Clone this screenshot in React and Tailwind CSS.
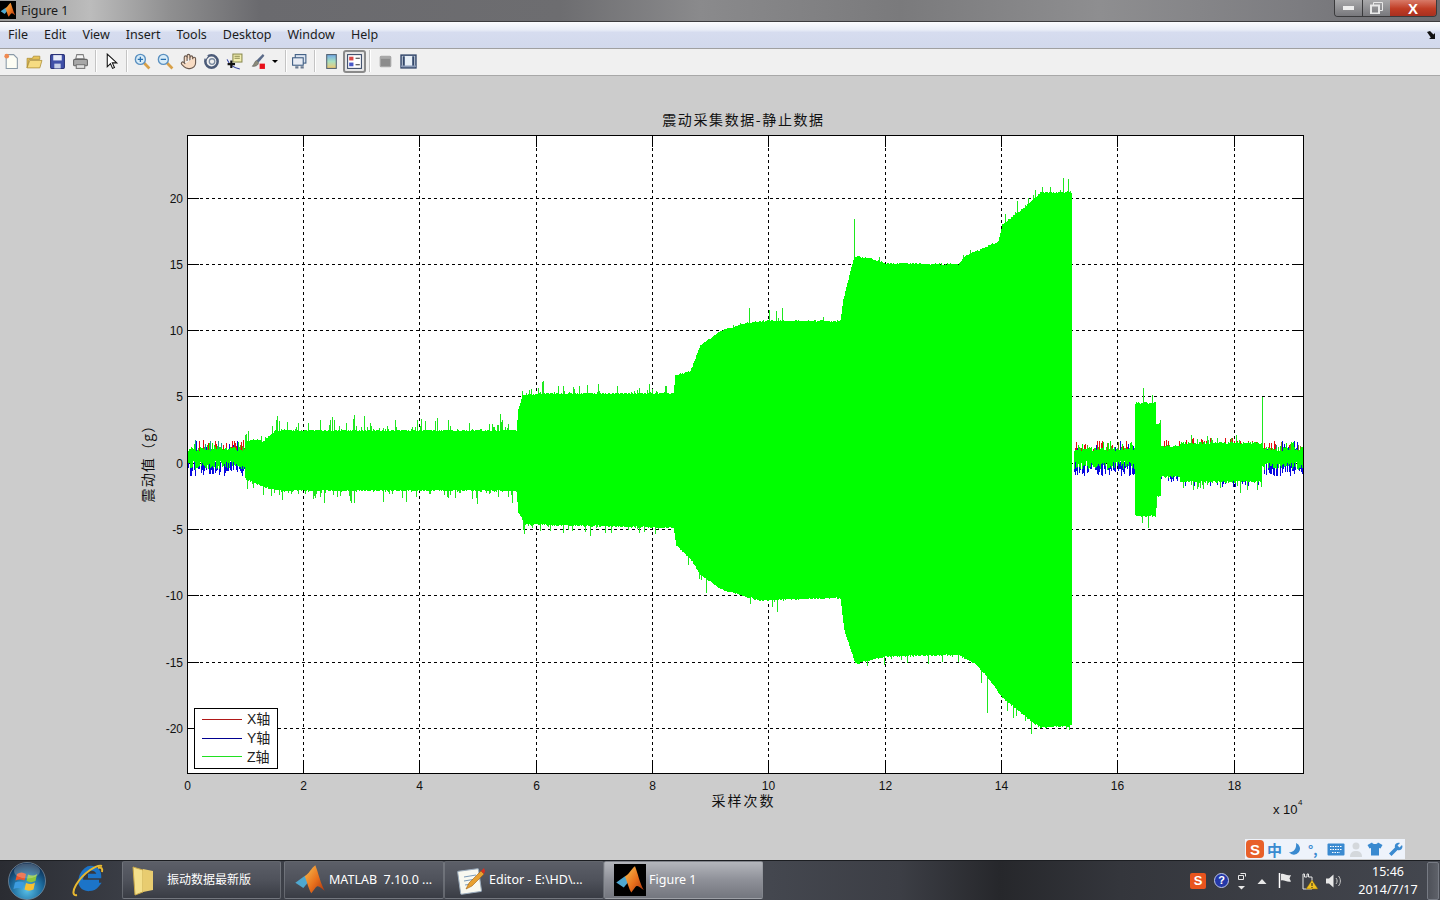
import React from "react";
import { Hand } from "lucide-react";

// seeded random so the trace stays the same on every render
let seed = 12345;
const rnd = () => {
  seed = (seed * 1664525 + 1013904223) % 4294967296;
  return seed / 4294967296;
};

const lerp = (pts, x) => {
  for (let i = 1; i < pts.length; i++) {
    if (x <= pts[i][0]) {
      const [x0, y0] = pts[i - 1];
      const [x1, y1] = pts[i];
      return y0 + ((y1 - y0) * (x - x0)) / (x1 - x0 || 1);
    }
  }
  return pts[pts.length - 1][1];
};

const upper = [
  [245, 442], [258, 440], [262, 443], [270, 436], [276, 431], [516, 431], [518, 410], [522, 396],
  [540, 394], [673, 394], [675, 376], [690, 372], [700, 346], [720, 332], [745, 324], [770, 321],
  [840, 322], [843, 300], [848, 280], [854, 257], [870, 259], [885, 264], [958, 265], [965, 257],
  [985, 248], [998, 242], [1002, 225], [1015, 215], [1028, 205], [1040, 193], [1071, 193], [1072, 193],
];
const lower = [
  [245, 478], [258, 484], [270, 488], [280, 490], [516, 490], [518, 512], [525, 524], [673, 527],
  [676, 545], [690, 558], [700, 574], [720, 588], [760, 600], [840, 597], [844, 630], [855, 663],
  [885, 656], [958, 654], [975, 663], [990, 680], [1000, 695], [1020, 712], [1040, 727], [1071, 725], [1072, 725],
];

// how often a spike leaves the envelope, by stretch of the recording
const spikeRate = (x) => {
  if (x < 516) return 0.24;
  if (x < 673) return 0.14;
  if (x < 1000) return 0.06;
  return 0.08;
};

const body = [];
const spikes = [];
for (let x = 245; x <= 1071; x++) {
  const jitter = rnd() * 1.6;
  const t = lerp(upper, x) - jitter;
  const b = lerp(lower, x) + jitter;
  body.push(`M${x + 0.5} ${t}V${b}`);
  if (rnd() < spikeRate(x)) spikes.push(`M${x + 0.5} ${t}v${-2 - Math.pow(rnd(), 1.8) * 14}`);
  if (rnd() < spikeRate(x)) spikes.push(`M${x + 0.5} ${b}v${2 + Math.pow(rnd(), 1.8) * 12}`);
}

// quiet parts of the recording, with red and blue showing around the green
const red = [];
const blue = [];
const olive = [];
const teal = [];
const green = [];
const quiet = (from, to) => {
  for (let x = from; x <= to; x++) {
    const px = x + 0.5;
    const top = 452 - (2 + rnd() * 10);
    const pick = rnd();
    if (pick < 0.28) red.push(`M${px} 453V${top}`);
    else if (pick < 0.46) blue.push(`M${px} 453V${top}`);
    else if (pick < 0.58) olive.push(`M${px} 453V${top}`);
    else if (pick < 0.66) teal.push(`M${px} 453V${top}`);
    else if (pick < 0.84) green.push(`M${px} 453V${top}`);
    if (rnd() < 0.7) blue.push(`M${px} 462V${468 + rnd() * 8.5}`);
    green.push(`M${px} ${451 - rnd() * 4}V${461 + rnd() * 9}`);
  }
};
quiet(187, 244);
quiet(1074, 1134);
quiet(1262, 1302);

const noisy = [];
for (let x = 1135; x <= 1160; x++) {
  const narrow = x > 1155;
  const t = narrow ? 425 : 404;
  const b = narrow ? 495 : 515;
  noisy.push(`M${x + 0.5} ${t - rnd() * 2}V${b + rnd() * 2}`);
}
for (let x = 1161; x <= 1261; x++) {
  const px = x + 0.5;
  const rise = x < 1180 ? 447 : 444;
  const fall = x < 1180 ? 476 : 481;
  noisy.push(`M${px} ${rise - rnd() * 2}V${fall + rnd() * 2}`);
  if (rnd() < 0.22) red.push(`M${px} ${rise}v${-2 - rnd() * 5}`);
  if (rnd() < 0.25) blue.push(`M${px} ${fall}v${2 + rnd() * 5}`);
  if (rnd() < 0.2 && x > 1178 && x < 1240) spikes.push(`M${px} ${rise}v${-2 - rnd() * 12}`);
  if (rnd() < 0.24 && x > 1178) spikes.push(`M${px} ${fall}v${2 + rnd() * 10}`);
}

const extra = [
  [854, 219, 258], [1063, 178, 193], [1068, 179, 193], [987, 672, 713], [1143, 388, 405], [1152, 395, 405],
  [1148, 515, 528], [1142, 515, 523], [1262, 397, 446], [1160, 420, 432], [1156, 495, 508],
];
extra.forEach(([x, a, b]) => spikes.push(`M${x + 0.5} ${a}V${b}`));

const xTicks = [303.5, 419.5, 536.5, 652.5, 768.5, 885.5, 1001.5, 1117.5, 1234.5];
const yTicks = [198.5, 264.5, 330.5, 396.5, 463.5, 529.5, 595.5, 662.5, 728.5];
const yLabels = ["20", "15", "10", "5", "0", "-5", "-10", "-15", "-20"];
const xLabels = ["2", "4", "6", "8", "10", "12", "14", "16", "18"];

const MatlabLogo = ({ size = 20 }) => (
  <svg width={size} height={size} viewBox="0 0 24 24">
    <defs>
      <linearGradient id="peak" x1="0" y1="0" x2="1" y2="1">
        <stop offset="0" stopColor="#f8c050" />
        <stop offset="0.55" stopColor="#e8701c" />
        <stop offset="1" stopColor="#a83010" />
      </linearGradient>
    </defs>
    <path d="M1 14 L8 9 L12 12 L7 18 Z" fill="#4fa8d0" />
    <path d="M8 9 C11 8 13 3 16 1 C18 6 20 15 23 20 C20 18 18 15 16 18 L13 22 C11 19 10 14 8 9 Z" fill="url(#peak)" />
  </svg>
);

const Sep = ({ className = "mx-[3px]" }) => (
  <div className={`w-[2px] h-[22px] bg-[#c4c4c4] border-r border-white shrink-0 ${className}`} />
);

const Tool = ({ children, active }) => (
  <div
    className={`w-[23px] h-[23px] flex items-center justify-center shrink-0 ${
      active ? "border-2 border-[#8a8a8a] rounded-[3px] bg-[#e6e6e6]" : ""
    }`}
  >
    {children}
  </div>
);

const Icon = ({ children }) => (
  <svg width="17" height="17" viewBox="0 0 16 16">
    {children}
  </svg>
);

const Toolbar = () => (
  <div className="h-[26px] pb-[2px] bg-[#f0f0f0] flex items-center">
    <Tool>
      <Icon>
        <path d="M3 1.5h7l3.5 3.5v9.5H3z" fill="#fdfdf4" stroke="#8a9aa8" />
        <circle cx="3.5" cy="3" r="2.2" fill="#f08a50" />
      </Icon>
    </Tool>
    <Tool>
      <Icon>
        <path d="M1 5h5l1-2h6v3H3L1 14z" fill="#e8c458" stroke="#a88a30" strokeWidth="0.7" />
        <path d="M1 14l2.5-7H15l-2 7z" fill="#f6dc82" stroke="#a88a30" strokeWidth="0.7" />
      </Icon>
    </Tool>
    <Tool>
      <Icon>
        <rect x="1.5" y="1.5" width="13" height="13" rx="1" fill="#4050a8" stroke="#2a3278" />
        <rect x="4" y="2" width="8" height="5" fill="#e8ecf8" />
        <rect x="5" y="10" width="6" height="4.5" fill="#c8d0e8" />
      </Icon>
    </Tool>
    <Tool>
      <Icon>
        <path d="M4.5 1.5h6l1 4h-8z" fill="#f4f4f4" stroke="#808080" />
        <rect x="1.5" y="6" width="13" height="6" rx="1" fill="#a8a8a8" stroke="#666" />
        <rect x="4" y="11" width="8" height="3.5" fill="#e0e0e0" stroke="#777" />
      </Icon>
    </Tool>
    <Sep className="ml-[3px] mr-[3px]" />
    <Tool>
      <Icon>
        <path d="M4 1v12l3-3 2 4.5 1.8-.8-2-4.4H13z" fill="#fff" stroke="#111" strokeWidth="1" />
      </Icon>
    </Tool>
    <Sep />
    <Tool>
      <Icon>
        <path d="M9.5 9.5L14.5 14.5" stroke="#d8a048" strokeWidth="2.6" />
        <circle cx="6" cy="6" r="4.7" fill="#d8ecf8" stroke="#5a90c0" strokeWidth="1.3" />
        <path d="M3.5 6h5M6 3.5v5" stroke="#2a70b0" strokeWidth="1.2" />
      </Icon>
    </Tool>
    <Tool>
      <Icon>
        <path d="M9.5 9.5L14.5 14.5" stroke="#d8a048" strokeWidth="2.6" />
        <circle cx="6" cy="6" r="4.7" fill="#d8ecf8" stroke="#5a90c0" strokeWidth="1.3" />
        <path d="M3.5 6h5" stroke="#2a70b0" strokeWidth="1.2" />
      </Icon>
    </Tool>
    <Tool>
      <Hand size={17} fill="#f8dcc4" stroke="#6a5a50" strokeWidth={1.6} />
    </Tool>
    <Tool>
      <Icon>
        <circle cx="8" cy="8" r="5.8" fill="none" stroke="#4a5a78" strokeWidth="2.4" />
        <circle cx="8.5" cy="8" r="2.6" fill="none" stroke="#7a8aa0" strokeWidth="1.2" />
        <path d="M1 2l4 .5L2.5 6z" fill="#f0f0f0" />
      </Icon>
    </Tool>
    <Tool>
      <Icon>
        <rect x="6.5" y="1" width="8.5" height="7.5" fill="#f2eeb0" stroke="#8a8a50" />
        <path d="M8 3h5M8 5h5" stroke="#8a8a50" />
        <path d="M1 6c2 5 6 8 12 9" fill="none" stroke="#3040a0" />
        <path d="M5 7v7M1.5 10.5h7" stroke="#111" strokeWidth="2" />
      </Icon>
    </Tool>
    <Tool>
      <Icon>
        <path d="M13 1L7 7l2 2 5.5-6.5z" fill="#5a6a88" />
        <path d="M7 7c-2 1-1.500 3-4 5.500 3 .5 6-1 6-3.500z" fill="#8a8a7a" stroke="#555" strokeWidth="0.5" />
        <rect x="10" y="10" width="5" height="5" fill="#e8101a" />
      </Icon>
    </Tool>
    <div className="w-0 h-0 border-x-[3px] border-x-transparent border-t-[3px] border-t-black ml-[3px] mr-[5px] shrink-0" />
    <Sep className="ml-[2px] mr-[1px]" />
    <Tool>
      <Icon>
        <rect x="4" y="1.500" width="10" height="8" fill="#dce4f0" stroke="#3a5a80" />
        <rect x="1.500" y="4.500" width="10" height="7" fill="#e8ecf4" stroke="#3a5a80" />
        <path d="M4 13.500h3M9 13.500h3" stroke="#6a7a90" strokeWidth="2" />
      </Icon>
    </Tool>
    <Sep className="ml-[3px] mr-[4px]" />
    <Tool>
      <svg width="17" height="17" viewBox="0 0 16 16">
        <defs>
          <linearGradient id="cbar" x1="0" y1="0" x2="0" y2="1">
            <stop offset="0" stopColor="#70a8e8" />
            <stop offset="0.5" stopColor="#a8e0c0" />
            <stop offset="1" stopColor="#f0c870" />
          </linearGradient>
        </defs>
        <rect x="3.500" y="1.500" width="9" height="13" fill="url(#cbar)" stroke="#506070" />
      </svg>
    </Tool>
    <Tool active>
      <Icon>
        <rect x="1.500" y="1.500" width="13" height="13" fill="#fff" stroke="#3a4a68" />
        <rect x="3" y="3.500" width="4" height="3.500" fill="#d84848" />
        <rect x="3" y="9" width="4" height="3.500" fill="#4858c8" />
        <path d="M9 5h4M9 11h4" stroke="#333" />
      </Icon>
    </Tool>
    <Sep />
    <Tool>
      <Icon>
        <rect x="3" y="3" width="10" height="10" rx="1" fill="#8c8c8c" stroke="#a8a8a8" />
        <rect x="3" y="3" width="10" height="2.500" fill="#a8a8a8" />
      </Icon>
    </Tool>
    <Tool>
      <Icon>
        <rect x="1" y="2" width="14" height="12" fill="#e8f0f8" stroke="#34486c" strokeWidth="1.400" />
        <path d="M3.500 3v9.500M12.500 3v9.500" stroke="#34486c" strokeWidth="2" />
        <path d="M1 12.500h14" stroke="#8a9ab8" strokeWidth="1.500" />
      </Icon>
    </Tool>
  </div>
);

const Chart = () => (
  <svg viewBox="0 76 1440 784" className="block w-full h-[784px]">
    <rect x="187.500" y="135.500" width="1116" height="638" fill="#fff" />
    <g stroke="#000" strokeDasharray="3 3" shapeRendering="crispEdges">
      {xTicks.map((x) => (
        <path key={x} d={`M${x} 136V773`} />
      ))}
      {yTicks.map((y) => (
        <path key={y} d={`M188 ${y}H1303`} />
      ))}
    </g>
    <g stroke="#000" shapeRendering="crispEdges">
      {xTicks.map((x) => (
        <path key={x} d={`M${x} 136v11M${x} 773v-11`} />
      ))}
      {yTicks.map((y) => (
        <path key={y} d={`M188 ${y}h11M1303 ${y}h-11`} />
      ))}
    </g>

    <path d={red.join("")} stroke="#e01010" fill="none" shapeRendering="crispEdges" />
    <path d={blue.join("")} stroke="#0808e0" fill="none" shapeRendering="crispEdges" />
    <path d={olive.join("")} stroke="#7a8a18" fill="none" shapeRendering="crispEdges" />
    <path d={teal.join("")} stroke="#189a90" fill="none" shapeRendering="crispEdges" />
    <path d={green.join("")} stroke="#00ff00" fill="none" shapeRendering="crispEdges" />
    <path d={spikes.join("")} stroke="#1ee81e" fill="none" shapeRendering="crispEdges" />
    <path d={noisy.join("")} stroke="#00ff00" fill="none" shapeRendering="crispEdges" />
    <path d={body.join("")} stroke="#00ff00" fill="none" shapeRendering="crispEdges" />

    <rect x="187.500" y="135.500" width="1116" height="638" fill="none" stroke="#000" shapeRendering="crispEdges" />

    <g className="font-['Liberation_Sans'] text-[12px]" fill="#111">
      {yLabels.map((t, i) => (
        <text key={t} x="183" y={yTicks[i] + 4.500} textAnchor="end">
          {t}
        </text>
      ))}
      <text x="187.500" y="790" textAnchor="middle">
        0
      </text>
      {xLabels.map((t, i) => (
        <text key={t} x={xTicks[i]} y="790" textAnchor="middle">
          {t}
        </text>
      ))}
      <text x="1273" y="814" className="text-[13px]">
        x 10
      </text>
      <text x="1298" y="805" className="text-[8px]">
        4
      </text>
    </g>

    <g className="font-['Noto_Sans_CJK_SC',sans-serif] text-[14px]" fill="#111">
      <text x="743.500" y="125" textAnchor="middle" letterSpacing="1.600">
        震动采集数据-静止数据
      </text>
      <text x="743.500" y="806" textAnchor="middle" letterSpacing="2">
        采样次数
      </text>
      <text transform="translate(153 460) rotate(-90)" textAnchor="middle" letterSpacing="1.200">
        震动值（g）
      </text>
    </g>

    <rect x="194.500" y="708.500" width="83" height="60" fill="#fff" stroke="#000" shapeRendering="crispEdges" />
    <path d="M202 719.500h40" stroke="#b01818" shapeRendering="crispEdges" />
    <path d="M202 738.500h40" stroke="#000090" shapeRendering="crispEdges" />
    <path d="M202 756.500h40" stroke="#20e020" shapeRendering="crispEdges" />
    <g className="font-['Liberation_Sans','Noto_Sans_CJK_SC',sans-serif] text-[14px]" fill="#222">
      <text x="247" y="724">
        X轴
      </text>
      <text x="247" y="743">
        Y轴
      </text>
      <text x="247" y="762">
        Z轴
      </text>
    </g>
  </svg>
);

const Orb = () => (
  <svg width="40" height="40" viewBox="0 0 40 40">
    <defs>
      <radialGradient id="orb" cx="0.5" cy="0.75" r="0.7">
        <stop offset="0" stopColor="#58c0e8" />
        <stop offset="0.6" stopColor="#1c6a9c" />
        <stop offset="1" stopColor="#0c2c50" />
      </radialGradient>
    </defs>
    <circle cx="20" cy="20" r="18.500" fill="url(#orb)" stroke="#8ca4b8" strokeOpacity="0.6" />
    <path d="M10 13c3-2 6-2 9 0l-1.500 6.500c-3-1.500-6-1.500-9 0z" fill="#e8562c" />
    <path d="M21 13.500c3 1.500 6 1.500 9-.5l-1.500 7c-3 1.500-6 1.500-9 0z" fill="#8cc63c" />
    <path d="M8 21.500c3-1.500 6-1.500 9 0L15.500 28c-3-1.500-6-1.500-9 0z" fill="#3c9ce0" />
    <path d="M19 22c3 1.500 6 1.500 9-.5L26.500 28.500c-3 1.500-6 1.500-9 0z" fill="#f8c030" />
    <ellipse cx="20" cy="10" rx="13" ry="7.500" fill="#fff" opacity="0.22" />
  </svg>
);

const IeLogo = () => (
  <svg width="34" height="34" viewBox="0 0 34 34">
    <path d="M17 12h11c0-7-8-10-13-6-5 4-7 12-4 16 3 4 11 4 15-1h-6c-3 2-7 1-7-3h15" fill="none" stroke="#1c74c8" strokeWidth="4.500" />
    <path d="M31 2C26 0 12 9 5 21c-4 7-3 11 1 10" fill="none" stroke="#e8b830" strokeWidth="2" />
    <path d="M27 4c3-1 5 0 4 4" fill="none" stroke="#e8b830" strokeWidth="2" />
  </svg>
);

const TaskButton = ({ width, active, icon, children }) => (
  <div
    className={`${width} h-[38px] mb-[1px] shrink-0 flex items-center border border-[#8a8d94]/50 rounded-[2px] text-[12.5px] whitespace-pre text-white font-['Noto_Sans','Noto_Sans_CJK_SC',sans-serif] ${
      active
        ? "bg-[linear-gradient(180deg,#b4b6bc_0%,#8e9098_50%,#73767e_100%)]"
        : "bg-[linear-gradient(180deg,#5c5f68_0%,#4f525b_50%,#393c44_100%)]"
    }`}
  >
    {icon}
    {children}
  </div>
);

const Tray = () => (
  <div className="flex items-center ml-auto h-full">
    <div className="w-[16px] h-[16px] rounded-[2px] bg-[#e8541e] flex items-center justify-center text-white text-[13px] font-bold leading-none font-['Liberation_Sans',sans-serif]">
      S
    </div>
    <div className="w-[15px] h-[15px] ml-[8px] rounded-full bg-[#2438a8] border border-[#c0c8e8] flex items-center justify-center text-white text-[11px] font-bold leading-none font-['Liberation_Sans',sans-serif]">
      ?
    </div>
    <svg width="14" height="24" viewBox="0 0 14 24" className="ml-[6px]">
      <path d="M3.500 6.500h5v4h-5zM5.500 4.500h5v3" fill="none" stroke="#e8e8e8" />
      <path d="M3 17h7l-3.500 3.500z" fill="#e8e8e8" />
    </svg>
    <svg width="10" height="8" viewBox="0 0 10 8" className="ml-[8px] mt-[3px]">
      <path d="M0.500 6h9L5 1z" fill="#e8e8e8" />
    </svg>
    <svg width="16" height="18" viewBox="0 0 16 18" className="ml-[11px]">
      <path d="M1.500 1v15" stroke="#fff" strokeWidth="1.500" />
      <path d="M3 2c3-1 5 2 10 1l-1.500 3.500 1.500 3c-4 1-7-2-10-1z" fill="#e8e8e8" />
    </svg>
    <svg width="18" height="20" viewBox="0 0 18 20" className="ml-[7px]">
      <path d="M2 3h1.500v3H6V3h1.500v3H11v12H2z" fill="none" stroke="#e8e8e8" />
      <path d="M11 9l6 9H5z" fill="#f0c020" stroke="#806000" strokeWidth="0.500" />
      <path d="M11 12v3M11 16v1" stroke="#222" />
    </svg>
    <svg width="18" height="16" viewBox="0 0 18 16" className="ml-[6px]">
      <path d="M1 5.500h3L8.500 1.500v13L4 10.500H1z" fill="#e8e8e8" />
      <path d="M11 5c1.500 2 1.500 4 0 6M13.500 3c2.500 3 2.500 7 0 10" fill="none" stroke="#c8c8c8" />
    </svg>
    <div className="w-[78px] ml-[6px] text-center text-[12.5px] leading-[18px] text-white font-['Noto_Sans',sans-serif]">
      <div>15:46</div>
      <div>2014/7/17</div>
    </div>
    <div className="w-[12px] h-[38px] mr-[1px] rounded-[2px] border border-[#777b84] bg-[linear-gradient(90deg,#4e5159,#5e6169)]" />
  </div>
);

const ImeBar = () => (
  <div className="absolute right-[35px] top-[839px] w-[160px] h-[20px] bg-[#eef3fb] flex items-center pl-[1px] font-['Noto_Sans_CJK_SC',sans-serif] text-[#3a8ad0]">
    <div className="w-[18px] h-[18px] rounded-[4px] bg-[#e8602a] flex items-center justify-center text-white text-[15px] font-bold leading-none font-['Liberation_Sans',sans-serif]">
      S
    </div>
    <span className="ml-[3px] text-[15px] font-bold leading-none">中</span>
    <svg width="14" height="14" viewBox="0 0 14 14" className="ml-[6px]">
      <path d="M8 1a6 6 0 1 1-7 9c4 1 8-3 7-9z" fill="#3a8ad0" />
    </svg>
    <span className="ml-[6px] w-[16px] text-[13px] font-bold leading-none">°,</span>
    <svg width="18" height="13" viewBox="0 0 18 13" className="ml-[3px]">
      <rect x="0.500" y="0.500" width="17" height="12" rx="1" fill="#3a8ad0" />
      <path d="M3 3.500h12M3 6.500h12M5 9.500h8" stroke="#fff" strokeDasharray="1.500 1" />
    </svg>
    <svg width="14" height="15" viewBox="0 0 14 15" className="ml-[4px]">
      <circle cx="7" cy="4" r="3.500" fill="#d4d8dc" />
      <path d="M1 15c0-5 3-6 6-6s6 1 6 6z" fill="#d4d8dc" />
    </svg>
    <svg width="16" height="14" viewBox="0 0 16 14" className="ml-[4px]">
      <path d="M5 0.500L0.500 3l2 3.500L4 6v7.500h8V6l1.500.500 2-3.500L11 .500C10 2.500 6 2.500 5 .500z" fill="#3a8ad0" />
    </svg>
    <svg width="15" height="15" viewBox="0 0 15 15" className="ml-[5px]">
      <path d="M14 3l-2.500 2.500L9.500 3.500 12 1c-3-1-6 1-5 4.500L1 11.500 3.500 14l6-6c3.500 1 6-2 4.500-5z" fill="#3a8ad0" />
    </svg>
  </div>
);

const App = () => {
  return (
    <div className="relative w-[1440px] h-[900px] overflow-hidden bg-[#cccccc] font-['Noto_Sans',sans-serif]">
      {/* Title bar */}
      <div className="h-[21px] flex items-start bg-[linear-gradient(90deg,#9a9a9a_0px,#bcbcbc_90px,#8f8f90_170px,#6a6a6e_260px,#6d6d70_560px,#8a8a8c_700px,#7a7a7c_900px,#8e8e90_1100px,#7c7c80_1300px,#6c6c70_1440px)]">
        <div className="w-[16px] h-[18px] ml-0 mt-[1px] bg-black flex items-center justify-center">
          <MatlabLogo size={16} />
        </div>
        <span className="ml-[5px] text-[12.5px] leading-[21px] text-[#1a1a1a]">Figure 1</span>
        <div className="ml-auto mr-[3px] h-[17px] flex border border-t-0 border-[#3a3a3c] rounded-b-[4px] overflow-hidden">
          <div className="w-[28px] flex items-center justify-center border-r border-[#3a3a3c] bg-[linear-gradient(180deg,#a8a8aa,#78787c)]">
            <div className="w-[11px] h-[4px] bg-[#eee]" />
          </div>
          <div className="w-[27px] flex items-center justify-center bg-[linear-gradient(180deg,#a8a8aa,#78787c)]">
            <svg width="13" height="12" viewBox="0 0 13 12">
              <path d="M3.500 3.500V.500h9v8h-3" fill="none" stroke="#e8e8e8" />
              <rect x="1" y="3.500" width="8" height="8" fill="none" stroke="#e8e8e8" strokeWidth="2" />
            </svg>
          </div>
          <div className="w-[46px] flex items-center justify-center bg-[linear-gradient(180deg,#d87a68_0%,#c03c24_55%,#a83020_100%)] text-white text-[15px] font-bold leading-none font-['Liberation_Sans',sans-serif]">
            X
          </div>
        </div>
      </div>
      <div className="h-px bg-[#3c3c3e]" />

      {/* Menu bar */}
      <div className="h-[27px] flex items-center gap-[16px] pl-[8px] pr-[4px] text-[12.5px] text-[#1c1c1c] bg-[linear-gradient(180deg,#fbfcfe_0%,#e9edf7_30%,#d6dcef_40%,#d2d9ec_100%)] border-b border-[#a0a0a0]">
        <span>File</span>
        <span>Edit</span>
        <span>View</span>
        <span>Insert</span>
        <span>Tools</span>
        <span>Desktop</span>
        <span>Window</span>
        <span>Help</span>
        <svg width="9" height="8" viewBox="0 0 9 8" className="ml-auto">
          <path d="M0 1l3-1 3.500 3.500L8 2v6H2l1.800-1.500z" fill="#111" />
        </svg>
      </div>

      <Toolbar />
      <div className="h-[1px] bg-[#a8a8a8]" />

      {/* Figure */}
      <Chart />

      <ImeBar />

      {/* Taskbar */}
      <div className="h-[40px] flex items-center border-t border-[#1c1e22] bg-[linear-gradient(90deg,#2a2c32_0px,#3a3d45_122px,#44474f_770px,#3c3e45_900px,#26272b_1000px,#34363c_1120px,#44474f_1440px)]">
        <div className="w-[54px] flex justify-center shrink-0">
          <Orb />
        </div>
        <div className="w-[68px] flex justify-center shrink-0">
          <IeLogo />
        </div>
        <TaskButton
          width="w-[159px] mr-[3px]"
          icon={
            <svg width="26" height="32" viewBox="0 0 26 32" className="ml-[8px] mr-[10px]">
              <path d="M2 3l10 3v22L4 31z" fill="#f4e08c" stroke="#c8a848" />
              <path d="M12 5l10 2v19l-10 2z" fill="#e8cc70" />
            </svg>
          }
        >
          <span className="text-[12px]">振动数据最新版</span>
        </TaskButton>
        <TaskButton
          width="w-[160px]"
          icon={
            <div className="ml-[9px] mr-[3px]">
              <MatlabLogo size={32} />
            </div>
          }
        >
          MATLAB  7.10.0 ...
        </TaskButton>
        <TaskButton
          width="w-[160px]"
          icon={
            <svg width="28" height="30" viewBox="0 0 28 30" className="ml-[12px] mr-[4px]">
              <rect x="2" y="5" width="21" height="23" rx="1" transform="rotate(-8 12 16)" fill="#f8f8f0" stroke="#9ab" />
              <path d="M7 12l12-2M7 16l12-2M8 20l7-1" stroke="#7a9ab8" />
              <path d="M9 24l3-6 12-12 3 3-12 12z" fill="#e8a030" stroke="#a06010" strokeWidth="0.600" />
              <path d="M24 6l3 3 1-3-1-3z" fill="#d83020" />
            </svg>
          }
        >
          Editor - E:\HD\...
        </TaskButton>
        <TaskButton
          width="w-[159px]"
          active
          icon={
            <div className="w-[32px] h-[32px] ml-[9px] mr-[3px] bg-black flex items-center justify-center">
              <MatlabLogo size={30} />
            </div>
          }
        >
          Figure 1
        </TaskButton>
        <Tray />
      </div>
    </div>
  );
};

export default App;
